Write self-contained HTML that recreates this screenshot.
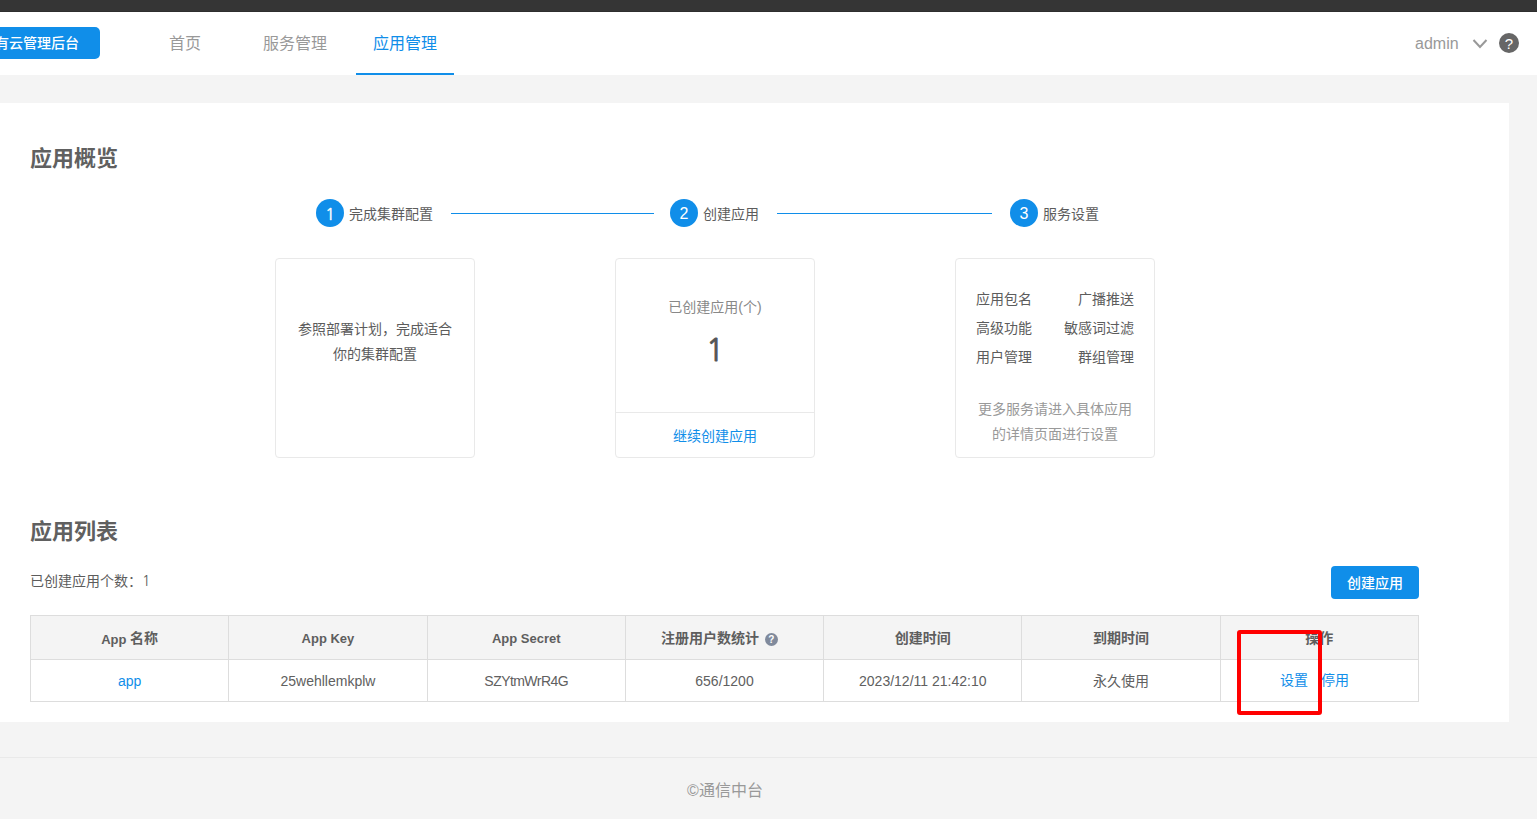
<!DOCTYPE html>
<html lang="zh-CN">
<head>
<meta charset="utf-8">
<title>应用管理</title>
<style>
*{box-sizing:border-box;margin:0;padding:0}
html,body{width:1537px;height:819px;overflow:hidden;background:#f4f4f4;
  font-family:"Liberation Sans","Noto Sans CJK SC",sans-serif;color:#5c5c5c;font-size:14px}
.abs{position:absolute;white-space:nowrap}
#topbar{position:absolute;left:0;top:0;width:1537px;height:12px;background:#353535;border-bottom:1px solid #2e2e2e}
#header{position:absolute;left:0;top:12px;width:1537px;height:63px;background:#fff}
#logo{position:absolute;left:-30px;top:15px;width:130px;height:32px;background:#108ee9;border-radius:5px;
  color:#fff;font-size:14px;line-height:32px;text-align:right;padding-right:21px;font-weight:500}
.nav{position:absolute;top:0;height:63px;line-height:64px;font-size:16px;color:#999;text-align:center}
.nav.on{color:#108ee9;border-bottom:2px solid #108ee9}
#admin{position:absolute;left:1415px;top:0;line-height:64px;font-size:16px;color:#999}
#main{position:absolute;left:0;top:103px;width:1509px;height:619px;background:#fff}
h2{position:absolute;left:30px;font-size:22px;font-weight:700;color:#606060;line-height:30px;white-space:nowrap}
.num{position:absolute;top:199px;width:28px;height:28px;border-radius:50%;background:#108ee9;color:#fff;
  font-size:16px;line-height:30px;text-align:center}
.one{font-family:"NanumGothic","Liberation Sans",sans-serif}
.num.one{-webkit-text-stroke:0.4px #fff}
.big1{font-size:30px;position:relative;top:0px}
.stxt{position:absolute;top:200px;line-height:28px;font-size:14px;color:#5c5c5c;white-space:nowrap}
.sline{position:absolute;top:213px;height:1px;background:#108ee9}
.card{position:absolute;top:258px;width:200px;height:200px;border:1px solid #e9e9e9;border-radius:4px;background:#fff}
table{position:absolute;left:30px;top:615px;width:1389px;border-collapse:collapse;table-layout:fixed}
th,td{border:1px solid #ddd;text-align:center;font-size:14px;color:#606060;white-space:nowrap}
th{height:44px;background:#f4f4f4;font-weight:700;color:#5e5e5e}
td{height:42px}
a{color:#108ee9;text-decoration:none}
.c{position:relative;top:-1px}
.l{font-size:13px;position:relative;top:0px}
.q{display:inline-block;width:13px;height:13px;border-radius:50%;background:#808a9c;color:#fff;font-size:10px;line-height:13px;vertical-align:1px;margin-left:2px;font-weight:700}
</style>
</head>
<body>
<div id="topbar"></div>
<div id="header">
  <div id="logo">私有云管理后台</div>
  <div class="nav" style="left:152px;width:66px">首页</div>
  <div class="nav" style="left:246px;width:98px">服务管理</div>
  <div class="nav on" style="left:356px;width:98px">应用管理</div>
  <div id="admin">admin</div>
  <svg class="abs" style="left:1472px;top:26px" width="16" height="12" viewBox="0 0 16 12"><path d="M1.5 2 L8 9 L14.5 2" fill="none" stroke="#999" stroke-width="2"/></svg>
  <div class="abs" style="left:1499px;top:21px;width:20px;height:20px;border-radius:50%;background:#666;color:#fff;font-size:15px;line-height:21px;text-align:center;font-weight:400">?</div>
</div>

<div id="main"></div>

<h2 style="top:144px">应用概览</h2>

<div class="num one" style="left:316px">1</div>
<div class="stxt" style="left:349px">完成集群配置</div>
<div class="sline" style="left:451px;width:203px"></div>
<div class="num" style="left:670px">2</div>
<div class="stxt" style="left:703px">创建应用</div>
<div class="sline" style="left:777px;width:215px"></div>
<div class="num" style="left:1010px">3</div>
<div class="stxt" style="left:1043px">服务设置</div>

<div class="card" style="left:275px">
  <div class="abs" style="left:0;width:198px;top:58px;text-align:center;line-height:25px;font-size:14px;color:#5c5c5c;white-space:normal;padding:0 20px">参照部署计划，完成适合你的集群配置</div>
</div>
<div class="card" style="left:615px">
  <div class="abs" style="left:0;width:198px;top:37px;text-align:center;font-size:14px;color:#888;line-height:22px">已创建应用(个)</div>
  <div class="abs" style="left:0;width:198px;top:69px;text-align:center;font-size:32px;color:#555;line-height:44px;-webkit-text-stroke:0.9px #555"><span class="one big1">1</span></div>
  <div class="abs" style="left:0;width:198px;top:153px;height:45px;border-top:1px solid #e9e9e9;text-align:center;font-size:14px;line-height:46px"><a>继续创建应用</a></div>
</div>
<div class="card" style="left:955px">
  <div class="abs" style="left:20px;top:29px;line-height:22px">应用包名</div>
  <div class="abs" style="right:20px;top:29px;line-height:22px">广播推送</div>
  <div class="abs" style="left:20px;top:58px;line-height:22px">高级功能</div>
  <div class="abs" style="right:20px;top:58px;line-height:22px">敏感词过滤</div>
  <div class="abs" style="left:20px;top:87px;line-height:22px">用户管理</div>
  <div class="abs" style="right:20px;top:87px;line-height:22px">群组管理</div>
  <div class="abs" style="left:0;width:198px;top:138px;text-align:center;line-height:25px;color:#999;white-space:normal;padding:0 20px">更多服务请进入具体应用的详情页面进行设置</div>
</div>

<h2 style="top:517px">应用列表</h2>
<div class="abs" style="left:30px;top:570px;line-height:22px;font-size:14px;color:#5c5c5c">已创建应用个数：<span class="one">1</span></div>
<div class="abs" style="left:1331px;top:566px;width:88px;height:33px;background:#108ee9;border-radius:4px;color:#fff;font-size:14px;line-height:35px;text-align:center;font-weight:500">创建应用</div>

<table>
<tr><th><span class="l">App </span><span class="c">名称</span></th><th><span class="l">App Key</span></th><th><span class="l">App Secret</span></th><th style="padding-right:10px"><span class="c">注册用户数统计</span> <span class="q">?</span></th><th><span class="c">创建时间</span></th><th><span class="c">到期时间</span></th><th><span class="c">操作</span></th></tr>
<tr><td><a>app</a></td><td>25wehllemkplw</td><td><span style="letter-spacing:-0.55px">SZYtmWrR4G</span></td><td>656/1200</td><td>2023/12/11 21:42:10</td><td><span class="c">永久使用</span></td><td></td></tr>
</table>
<a class="abs" style="left:1280px;top:669px;line-height:22px;font-size:14px">设置</a>
<a class="abs" style="left:1321px;top:669px;line-height:22px;font-size:14px">停用</a>

<div class="abs" style="left:1237px;top:630px;width:85px;height:85px;border:4px solid #f00;border-radius:3px"></div>

<div class="abs" style="left:0;top:757px;width:1537px;height:1px;background:#e9e9e9"></div>
<div class="abs" style="left:0;width:1450px;top:779px;text-align:center;font-size:16px;color:#999;line-height:24px">©通信中台</div>
</body>
</html>
